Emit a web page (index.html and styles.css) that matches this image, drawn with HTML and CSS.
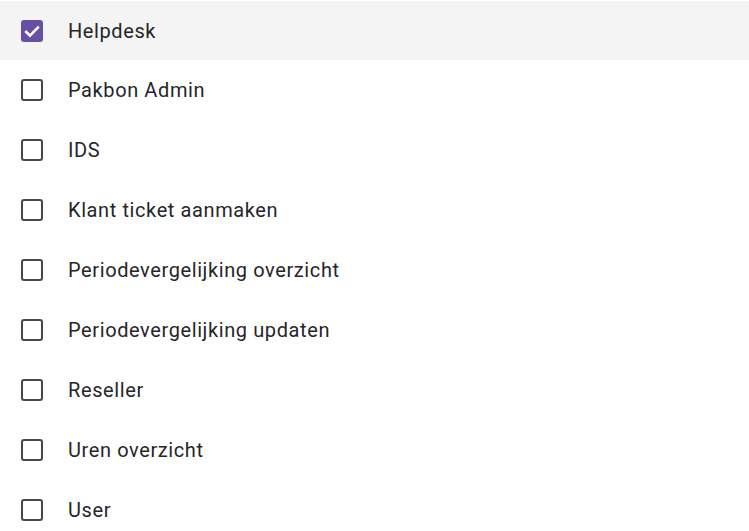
FILE: index.html
```html
<!DOCTYPE html>
<html>
<head>
<meta charset="utf-8">
<link rel="stylesheet" href="styles.css">
</head>
<body>
<ul class="list">
  <li class="item selected">
    <span class="box checked"><svg viewBox="0 0 22 22" width="22" height="22"><path d="M4.3 11 L8.9 15.6 L17.8 6.7" fill="none" stroke="#fff" stroke-width="2.6"/></svg></span>
    <span class="label">Helpdesk</span>
  </li>
  <li class="item"><span class="box"></span><span class="label">Pakbon Admin</span></li>
  <li class="item"><span class="box"></span><span class="label">IDS</span></li>
  <li class="item"><span class="box"></span><span class="label">Klant ticket aanmaken</span></li>
  <li class="item"><span class="box"></span><span class="label">Periodevergelijking overzicht</span></li>
  <li class="item"><span class="box"></span><span class="label">Periodevergelijking updaten</span></li>
  <li class="item"><span class="box"></span><span class="label">Reseller</span></li>
  <li class="item"><span class="box"></span><span class="label">Uren overzicht</span></li>
  <li class="item"><span class="box"></span><span class="label">User</span></li>
</ul>
</body>
</html>
```
FILE: styles.css
```css
html, body {
  margin: 0;
  padding: 0;
  background: #fff;
}
.list {
  list-style: none;
  margin: 0;
  padding: 1px 0 0;
  font-family: Roboto, "Liberation Sans", sans-serif;
}
.item {
  display: flex;
  align-items: center;
  height: 60px;
  padding-left: 21px;
  box-sizing: border-box;
}
.item.selected {
  background: #f4f4f4;
  height: 59px;
}
.box {
  width: 22px;
  height: 22px;
  box-sizing: border-box;
  border: 2.4px solid #49454f;
  border-radius: 3px;
  flex: none;
  display: flex;
}
.box.checked {
  background: #6750a4;
  border: none;
}
.label {
  margin-left: 25px;
  font-size: 20px;
  font-weight: 400;
  letter-spacing: 0.6px;
  color: #27252a;
}
```
